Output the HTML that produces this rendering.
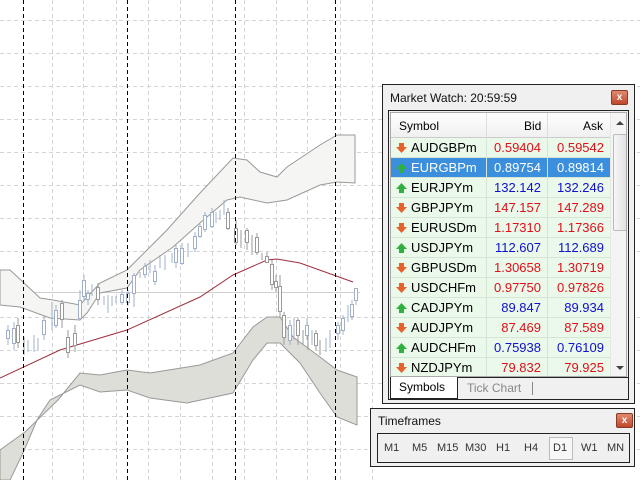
<!DOCTYPE html>
<html><head><style>
*{margin:0;padding:0;box-sizing:border-box}
body{width:640px;height:480px;overflow:hidden;background:#fff;font-family:"Liberation Sans",sans-serif;font-size:12px;position:relative}
.abs{position:absolute}
.win{position:absolute;background:#f0f0f0;border:1px solid #222;}
.close{position:absolute;width:17px;height:15px;border-radius:2px;background:linear-gradient(#e08a70,#c0482a);border:1px solid #8a3a28;color:#fff;font-size:10px;font-weight:bold;text-align:center;line-height:13px}
.row{position:absolute;left:0;height:20px;width:219px;background:#eaf9ea;border-bottom:1px solid #d6e4d6;font-size:13px}
.row.sel{background:#3c8fdc;color:#fff}
.row span{position:absolute;top:2px}
.sym{left:20px}
.bid{right:69px}
.ask{right:6px}
.c1{position:absolute;left:95px;top:0;height:20px;border-left:1px solid #d6e4d6}
.c2{position:absolute;left:156px;top:0;height:20px;border-left:1px solid #d6e4d6}
.ic{position:absolute;left:5px;top:5px}
.r{color:#e0101a}.b{color:#1010d0}
.sel .r,.sel .b{color:#fff}
.tf{position:absolute;top:8px;color:#333;font-size:11px}
</style></head><body>
<svg class="abs" style="left:0;top:0" width="640" height="480">
<g stroke="#d4d4d4" stroke-dasharray="4,3" stroke-width="1">
<line x1="0" y1="20.5" x2="640" y2="20.5"/><line x1="0" y1="53.5" x2="640" y2="53.5"/><line x1="0" y1="86.5" x2="640" y2="86.5"/><line x1="0" y1="119.5" x2="640" y2="119.5"/><line x1="0" y1="152.5" x2="640" y2="152.5"/><line x1="0" y1="185.5" x2="640" y2="185.5"/><line x1="0" y1="218.5" x2="640" y2="218.5"/><line x1="0" y1="251.5" x2="640" y2="251.5"/><line x1="0" y1="317.5" x2="640" y2="317.5"/><line x1="0" y1="350.5" x2="640" y2="350.5"/><line x1="0" y1="383.5" x2="640" y2="383.5"/><line x1="0" y1="416.5" x2="640" y2="416.5"/><line x1="0" y1="449.5" x2="640" y2="449.5"/>
<line x1="52.5" y1="0" x2="52.5" y2="480"/><line x1="83.5" y1="0" x2="83.5" y2="480"/><line x1="116.5" y1="0" x2="116.5" y2="480"/><line x1="148.5" y1="0" x2="148.5" y2="480"/><line x1="180.5" y1="0" x2="180.5" y2="480"/><line x1="212.5" y1="0" x2="212.5" y2="480"/><line x1="244.5" y1="0" x2="244.5" y2="480"/><line x1="276.5" y1="0" x2="276.5" y2="480"/><line x1="307.5" y1="0" x2="307.5" y2="480"/><line x1="340.5" y1="0" x2="340.5" y2="480"/><line x1="372.5" y1="0" x2="372.5" y2="480"/>
</g>
<line x1="0" y1="292.5" x2="360" y2="292.5" stroke="#cfcfcf"/>
<path d="M0,270 L10,270 23,282 40,298 53,300 80,305 100,283 127,270 140,257 167,230 200,193 233,158 247,160 260,172 277,177 287,167 320,145 337,135 355,135 L355,183 337,182 320,185 287,200 267,203 240,197 227,200 200,223 173,247 140,270 127,288 100,293 87,313 80,320 50,318 20,307 0,305Z" fill="#f5f5f3" stroke="#999" stroke-width="1"/>
<path d="M0,450 L25,432 58,400 80,373 100,375 127,370 150,373 200,365 233,353 253,327 267,317 280,317 293,337 320,357 337,370 357,377 L357,425 337,417 320,393 300,363 280,343 267,343 253,360 233,393 187,403 150,398 127,390 100,392 80,385 50,400 37,420 23,453 10,480 0,480Z" fill="#deded8" stroke="#999" stroke-width="1"/>
<path d="M0,378 L60,350 127,330 200,297 233,275 267,260 277,259 300,263 353,282" fill="none" stroke="#a03040" stroke-width="1"/>
<g stroke="#9fb0c8" fill="#fff" stroke-width="1">
<line x1="8" y1="325" x2="8" y2="345"/><rect x="6.5" y="330.5" width="3" height="8"/>
<line x1="14" y1="322" x2="14" y2="350"/><rect x="12.5" y="328.5" width="3" height="15"/>
<line x1="28" y1="340" x2="28" y2="352"/><line x1="34" y1="335" x2="34" y2="352"/><line x1="38" y1="338" x2="38" y2="350"/>
<line x1="44" y1="315" x2="44" y2="340"/><rect x="42.5" y="320.5" width="3" height="14"/>
<line x1="52" y1="302" x2="52" y2="330"/><line x1="56" y1="305" x2="56" y2="328"/><rect x="54.5" y="310.5" width="3" height="15"/>
<line x1="80" y1="290" x2="80" y2="320"/><rect x="78.5" y="300.5" width="3" height="18"/>
<line x1="84" y1="275" x2="84" y2="300"/><rect x="82.5" y="280.5" width="3" height="16"/>
<line x1="88" y1="290" x2="88" y2="305"/><rect x="86.5" y="293.5" width="3" height="6"/>
<line x1="92" y1="284" x2="92" y2="296"/>
<line x1="104" y1="296" x2="104" y2="305"/><line x1="108" y1="295" x2="108" y2="313"/><line x1="112" y1="296" x2="112" y2="306"/><line x1="116" y1="296" x2="116" y2="303"/>
<line x1="122" y1="290" x2="122" y2="305"/><rect x="120.5" y="294.5" width="3" height="8"/>
<line x1="128" y1="290" x2="128" y2="306"/><rect x="126.5" y="293.5" width="3" height="9"/>
<line x1="134" y1="273" x2="134" y2="307"/><rect x="132.5" y="275.5" width="3" height="18"/>
<line x1="140" y1="272" x2="140" y2="278"/><line x1="145" y1="263" x2="145" y2="278"/><rect x="143.5" y="266.5" width="3" height="8"/>
<line x1="150" y1="260" x2="150" y2="273"/><line x1="155" y1="265" x2="155" y2="285"/><rect x="153.5" y="271.5" width="3" height="10"/>
<line x1="160" y1="255" x2="160" y2="268"/><line x1="165" y1="255" x2="165" y2="270"/><line x1="172" y1="253" x2="172" y2="263"/>
<line x1="176" y1="245" x2="176" y2="268"/><rect x="174.5" y="248.5" width="3" height="14"/>
<line x1="182" y1="243" x2="182" y2="265"/><rect x="180.5" y="248.5" width="3" height="15"/>
<line x1="188" y1="243" x2="188" y2="257"/><line x1="195" y1="232" x2="195" y2="252"/><rect x="193.5" y="236.5" width="3" height="12"/>
<line x1="200" y1="224" x2="200" y2="238"/><rect x="198.5" y="226.5" width="3" height="10"/>
<line x1="205" y1="212" x2="205" y2="232"/><rect x="203.5" y="215.5" width="3" height="14"/>
<line x1="212" y1="208" x2="212" y2="228"/><rect x="210.5" y="212.5" width="3" height="14"/>
<line x1="216" y1="212" x2="216" y2="223"/><line x1="220" y1="210" x2="220" y2="220"/><line x1="224" y1="200" x2="224" y2="215"/>
<line x1="290" y1="320" x2="290" y2="345"/><rect x="288.5" y="325.5" width="3" height="15"/>
<line x1="294" y1="318" x2="294" y2="340"/><line x1="307" y1="318" x2="307" y2="340"/><rect x="305.5" y="325.5" width="3" height="10"/>
<line x1="312" y1="330" x2="312" y2="345"/><line x1="326" y1="338" x2="326" y2="352"/><line x1="330" y1="330" x2="330" y2="348"/>
<line x1="338" y1="322" x2="338" y2="340"/><rect x="336.5" y="325.5" width="3" height="8"/>
<line x1="343" y1="315" x2="343" y2="335"/><rect x="341.5" y="318.5" width="3" height="12"/>
<line x1="348" y1="305" x2="348" y2="322"/><line x1="352" y1="300" x2="352" y2="320"/><rect x="350.5" y="304.5" width="3" height="12"/>
<line x1="356" y1="288" x2="356" y2="305"/><rect x="354.5" y="288.5" width="3" height="12"/>
</g>
<g stroke="#9a9a9a" fill="#fff" stroke-width="1">
<line x1="18" y1="318" x2="18" y2="348"/><rect x="16.5" y="325.5" width="3" height="17"/>
<line x1="24" y1="337" x2="24" y2="355"/>
<line x1="62" y1="300" x2="62" y2="328"/><rect x="60.5" y="303.5" width="3" height="16"/>
<line x1="68" y1="330" x2="68" y2="358"/><rect x="66.5" y="337.5" width="3" height="15"/>
<line x1="75" y1="325" x2="75" y2="352"/><rect x="73.5" y="333.5" width="3" height="12"/>
<line x1="98" y1="283" x2="98" y2="305"/><rect x="96.5" y="287.5" width="3" height="12"/>
<line x1="228" y1="208" x2="228" y2="230"/><rect x="226.5" y="212.5" width="3" height="16"/>
<line x1="236" y1="220" x2="236" y2="245"/><rect x="234.5" y="228.5" width="3" height="14"/>
<line x1="241" y1="230" x2="241" y2="248"/><line x1="247" y1="228" x2="247" y2="250"/><rect x="245.5" y="230.5" width="3" height="12"/>
<line x1="252" y1="235" x2="252" y2="255"/><line x1="257" y1="233" x2="257" y2="255"/><rect x="255.5" y="237.5" width="3" height="15"/>
<line x1="262" y1="253" x2="262" y2="260"/><line x1="267" y1="252" x2="267" y2="262"/><rect x="265.5" y="256.5" width="3" height="6"/>
<line x1="272" y1="260" x2="272" y2="290"/><rect x="270.5" y="264.5" width="3" height="20"/>
<line x1="276" y1="275" x2="276" y2="292"/><rect x="274.5" y="281.5" width="3" height="6"/>
<line x1="280" y1="275" x2="280" y2="318"/><rect x="278.5" y="286.5" width="3" height="25"/>
<line x1="284" y1="312" x2="284" y2="345"/><rect x="282.5" y="315.5" width="3" height="22"/>
<line x1="298" y1="318" x2="298" y2="345"/><rect x="296.5" y="320.5" width="3" height="15"/>
<line x1="303" y1="330" x2="303" y2="345"/><line x1="308" y1="335" x2="308" y2="350"/>
<line x1="316" y1="330" x2="316" y2="350"/><rect x="314.5" y="333.5" width="3" height="12"/>
<line x1="320" y1="340" x2="320" y2="355"/>
</g>
<g stroke="#000" stroke-dasharray="4,3" stroke-width="1">
<line x1="23.5" y1="0" x2="23.5" y2="480"/><line x1="127.5" y1="0" x2="127.5" y2="480"/><line x1="235.5" y1="0" x2="235.5" y2="480"/><line x1="335.5" y1="0" x2="335.5" y2="480"/>
</g>
</svg>

<div class="win" style="left:382px;top:84px;width:253px;height:320px">
  <div class="abs" style="left:7px;top:6px;color:#111">Market Watch: 20:59:59</div>
  <div class="close" style="left:228px;top:5px">x</div>
  <div class="abs" style="left:5px;top:25px;width:241px;height:290px;border:1px solid #222;background:#f0f0f0">
    <div class="abs" style="left:1px;top:1px;width:237px;height:265px;background:#fff;border:1px solid #aaa;overflow:hidden">
      <div class="abs" style="left:0;top:0;width:219px;height:25px;background:linear-gradient(#fff,#f0f0f0);border-bottom:1px solid #ccc">
        <span class="abs" style="left:8px;top:6px">Symbol</span>
        <div class="abs" style="left:95px;top:0;height:25px;border-left:1px solid #ddd"></div>
        <span class="abs" style="left:133px;top:6px">Bid</span>
        <div class="abs" style="left:156px;top:0;height:25px;border-left:1px solid #ddd"></div>
        <span class="abs" style="left:192px;top:6px">Ask</span>
      </div>
      <div class="abs" style="left:219px;top:0;width:18px;height:263px;background:#f4f4f4;border-left:1px solid #e6e6e6">
        <div class="abs" style="left:5px;top:8px;width:0;height:0;border-left:4px solid transparent;border-right:4px solid transparent;border-bottom:4px solid #444"></div>
        <div class="abs" style="left:2px;top:21px;width:14px;height:97px;background:linear-gradient(90deg,#f6f6f6,#e2e2e2);border:1px solid #bbb;border-radius:2px"></div>
        <div class="abs" style="left:5px;top:253px;width:0;height:0;border-left:4px solid transparent;border-right:4px solid transparent;border-top:4px solid #444"></div>
      </div>
      <div class="row" style="top:25px"><svg class="ic" width="11" height="10"><path d="M3,0H8V4H11L5.5,10 0,4H3Z" fill="#e8602a"/></svg><span class="sym">AUDGBPm</span><div class="c1"></div><div class="c2"></div><span class="bid r">0.59404</span><span class="ask r">0.59542</span></div>
      <div class="row sel" style="top:45px"><svg class="ic" width="11" height="10"><path d="M3,10H8V6H11L5.5,0 0,6H3Z" fill="#30b040"/></svg><span class="sym">EURGBPm</span><div class="c1"></div><div class="c2"></div><span class="bid b">0.89754</span><span class="ask b">0.89814</span></div>
      <div class="row" style="top:65px"><svg class="ic" width="11" height="10"><path d="M3,10H8V6H11L5.5,0 0,6H3Z" fill="#30b040"/></svg><span class="sym">EURJPYm</span><div class="c1"></div><div class="c2"></div><span class="bid b">132.142</span><span class="ask b">132.246</span></div>
      <div class="row" style="top:85px"><svg class="ic" width="11" height="10"><path d="M3,0H8V4H11L5.5,10 0,4H3Z" fill="#e8602a"/></svg><span class="sym">GBPJPYm</span><div class="c1"></div><div class="c2"></div><span class="bid r">147.157</span><span class="ask r">147.289</span></div>
      <div class="row" style="top:105px"><svg class="ic" width="11" height="10"><path d="M3,0H8V4H11L5.5,10 0,4H3Z" fill="#e8602a"/></svg><span class="sym">EURUSDm</span><div class="c1"></div><div class="c2"></div><span class="bid r">1.17310</span><span class="ask r">1.17366</span></div>
      <div class="row" style="top:125px"><svg class="ic" width="11" height="10"><path d="M3,10H8V6H11L5.5,0 0,6H3Z" fill="#30b040"/></svg><span class="sym">USDJPYm</span><div class="c1"></div><div class="c2"></div><span class="bid b">112.607</span><span class="ask b">112.689</span></div>
      <div class="row" style="top:145px"><svg class="ic" width="11" height="10"><path d="M3,0H8V4H11L5.5,10 0,4H3Z" fill="#e8602a"/></svg><span class="sym">GBPUSDm</span><div class="c1"></div><div class="c2"></div><span class="bid r">1.30658</span><span class="ask r">1.30719</span></div>
      <div class="row" style="top:165px"><svg class="ic" width="11" height="10"><path d="M3,0H8V4H11L5.5,10 0,4H3Z" fill="#e8602a"/></svg><span class="sym">USDCHFm</span><div class="c1"></div><div class="c2"></div><span class="bid r">0.97750</span><span class="ask r">0.97826</span></div>
      <div class="row" style="top:185px"><svg class="ic" width="11" height="10"><path d="M3,10H8V6H11L5.5,0 0,6H3Z" fill="#30b040"/></svg><span class="sym">CADJPYm</span><div class="c1"></div><div class="c2"></div><span class="bid b">89.847</span><span class="ask b">89.934</span></div>
      <div class="row" style="top:205px"><svg class="ic" width="11" height="10"><path d="M3,0H8V4H11L5.5,10 0,4H3Z" fill="#e8602a"/></svg><span class="sym">AUDJPYm</span><div class="c1"></div><div class="c2"></div><span class="bid r">87.469</span><span class="ask r">87.589</span></div>
      <div class="row" style="top:225px"><svg class="ic" width="11" height="10"><path d="M3,10H8V6H11L5.5,0 0,6H3Z" fill="#30b040"/></svg><span class="sym">AUDCHFm</span><div class="c1"></div><div class="c2"></div><span class="bid b">0.75938</span><span class="ask b">0.76109</span></div>
      <div class="row" style="top:245px"><svg class="ic" width="11" height="10"><path d="M3,0H8V4H11L5.5,10 0,4H3Z" fill="#e8602a"/></svg><span class="sym">NZDJPYm</span><div class="c1"></div><div class="c2"></div><span class="bid r">79.832</span><span class="ask r">79.925</span></div>
    </div>
    <div class="abs" style="left:69px;top:266px;width:170px;border-top:1px solid #222"></div>
    <div class="abs" style="left:1px;top:266px;width:68px;height:22px;background:#fff;border:1px solid #222;border-top:none"><span class="abs" style="left:8px;top:3px">Symbols</span></div>
    <span class="abs" style="left:78px;top:270px;color:#888">Tick Chart</span>
    <div class="abs" style="left:143px;top:271px;height:13px;border-left:1px solid #888"></div>
  </div>
</div>

<div class="win" style="left:370px;top:408px;width:265px;height:59px">
  <div class="abs" style="left:7px;top:5px;color:#111">Timeframes</div>
  <div class="close" style="left:245px;top:4px">x</div>
  <div class="abs" style="left:6px;top:24px;width:253px;height:30px;border:1px solid #222;background:#f0f0f0">
    <span class="tf" style="left:6px">M1</span><span class="tf" style="left:34px">M5</span><span class="tf" style="left:59px">M15</span><span class="tf" style="left:87px">M30</span><span class="tf" style="left:118px">H1</span><span class="tf" style="left:146px">H4</span>
    <div class="abs" style="left:171px;top:3px;width:24px;height:23px;border:1px solid #bbb;background:#f8f8f8"></div>
    <span class="tf" style="left:175px">D1</span><span class="tf" style="left:203px">W1</span><span class="tf" style="left:229px">MN</span>
  </div>
</div>
</body></html>
